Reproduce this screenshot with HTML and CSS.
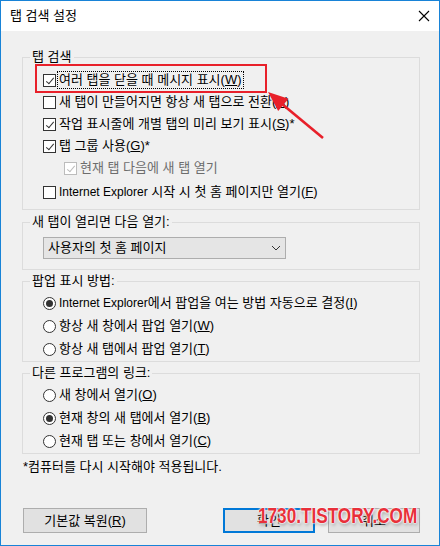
FILE: index.html
```html
<!DOCTYPE html>
<html lang="ko">
<head>
<meta charset="utf-8">
<title>탭 검색 설정</title>
<link rel="stylesheet" href="styles.css">
</head>
<body>
<div class="window">
  <div class="titlebar">
    <span class="title">탭 검색 설정</span>
    <svg class="close" width="12" height="12" viewBox="0 0 12 12"><path d="M1 1L11 11M11 1L1 11" stroke="#000" stroke-width="1.1" fill="none"/></svg>
  </div>
  <div class="content">
    <section class="group g1">
      <div class="group-title">탭 검색</div>
      <div class="rows">
        <div class="row"><span class="box checked"></span><span class="label focus">여러 탭을 닫을 때 메시지 표시(<u>W</u>)</span></div>
        <div class="row"><span class="box"></span><span class="label">새 탭이 만들어지면 항상 새 탭으로 전환(<u>A</u>)</span></div>
        <div class="row"><span class="box checked"></span><span class="label">작업 표시줄에 개별 탭의 미리 보기 표시(<u>S</u>)*</span></div>
        <div class="row"><span class="box checked"></span><span class="label">탭 그룹 사용(<u>G</u>)*</span></div>
        <div class="row sub disabled"><span class="box checked"></span><span class="label">현재 탭 다음에 새 탭 열기</span></div>
        <div class="row last"><span class="box"></span><span class="label"><span class="latin">Internet Explorer</span> 시작 시 첫 홈 페이지만 열기(<u>F</u>)</span></div>
      </div>
    </section>

    <section class="group g2">
      <div class="group-title">새 탭이 열리면 다음 열기:</div>
      <div class="select">
        <span>사용자의 첫 홈 페이지</span>
        <svg width="10" height="6" viewBox="0 0 10 6"><path d="M1 1L5 5L9 1" stroke="#333" stroke-width="1" fill="none"/></svg>
      </div>
    </section>

    <section class="group g3">
      <div class="group-title">팝업 표시 방법:</div>
      <div class="rows radios">
        <div class="row"><span class="radio on"></span><span class="label"><span class="latin">Internet Explorer</span>에서 팝업을 여는 방법 자동으로 결정(<u>I</u>)</span></div>
        <div class="row"><span class="radio"></span><span class="label">항상 새 창에서 팝업 열기(<u>W</u>)</span></div>
        <div class="row"><span class="radio"></span><span class="label">항상 새 탭에서 팝업 열기(<u>T</u>)</span></div>
      </div>
    </section>

    <section class="group g4">
      <div class="group-title">다른 프로그램의 링크:</div>
      <div class="rows radios">
        <div class="row"><span class="radio"></span><span class="label">새 창에서 열기(<u>O</u>)</span></div>
        <div class="row"><span class="radio on"></span><span class="label">현재 창의 새 탭에서 열기(<u>B</u>)</span></div>
        <div class="row"><span class="radio"></span><span class="label">현재 탭 또는 창에서 열기(<u>C</u>)</span></div>
      </div>
    </section>

    <p class="note">*컴퓨터를 다시 시작해야 적용됩니다.</p>

    <div class="buttons">
      <div class="btn btn-reset">기본값 복원(<u>R</u>)</div>
      <div class="btn btn-ok">확인</div>
      <div class="btn btn-cancel">취소</div>
    </div>
  </div>

  <svg class="annot" width="440" height="546" viewBox="0 0 440 546">
    <rect x="36" y="65" width="230" height="27" fill="none" stroke="#e8202a" stroke-width="2"/>
    <path d="M323 138L282 104" stroke="#e8202a" stroke-width="2.6" fill="none"/>
    <path d="M268 92L288.5 98.7L278.2 110.9Z" fill="#e8202a"/>
  </svg>
  <div class="watermark">1730.TISTORY.COM</div>
</div>
</body>
</html>
```
FILE: styles.css
```css
* { box-sizing: border-box; }
html, body { margin: 0; padding: 0; }
body {
  font-family: "Liberation Sans", "Noto Sans CJK KR", sans-serif;
  font-size: 13px;
  line-height: 16px;
  color: #000;
  background: #fff;
}
.latin { font-size: 12px; }
.window {
  position: relative;
  width: 440px;
  height: 546px;
  border: 1px solid #1883d7;
  background: #f0f0f0;
  overflow: hidden;
}
.titlebar {
  height: 30px;
  background: #fff;
  display: flex;
  align-items: center;
  justify-content: space-between;
  padding: 0 9px 0 9px;
}
.close { display: block; }

.content {
  padding: 26px 19px 0 21px;
}
.group {
  border: 1px solid #dcdcdc;
}
.group-title {
  width: fit-content;
  margin: -9px 0 0 7px;
  padding: 0 2px;
  height: 16px;
  line-height: 16px;
  background: #f0f0f0;
}
.rows { padding-left: 20px; }
.g1 .rows { padding-top: 4px; padding-bottom: 6px; }
.row {
  display: flex;
  align-items: center;
  height: 22px;
}
.g1 .row.last { margin-top: 2px; }
.row.sub { padding-left: 21px; }
.box {
  width: 13px;
  height: 13px;
  border: 1px solid #333;
  background: #fff;
  margin-right: 3px;
  flex: none;
  position: relative;
}
.box.checked::after {
  content: "";
  position: absolute;
  width: 3px;
  height: 7px;
  border-right: 1.2px solid #333;
  border-bottom: 1.2px solid #333;
  transform: rotate(40deg);
  transform-origin: center;
  left: 3.5px;
  top: 1px;
}
.disabled .box { border-color: #bcbcbc; }
.disabled .box.checked::after { border-color: #bcbcbc; }
.disabled .label { color: #6d6d6d; }
.label { white-space: nowrap; }
.label.focus { outline: 1px dotted #000; outline-offset: 0; padding: 0 1px; margin-left: -1px; }
u { text-decoration: underline; text-underline-offset: 1px; }

.g2 { margin-top: 12px; padding-bottom: 10px; }
.select {
  margin: 7px 0 0 20px;
  width: 243px;
  height: 22px;
  border: 1px solid #adadad;
  background: #e5e5e5;
  display: flex;
  align-items: center;
  justify-content: space-between;
  padding: 0 4px 0 4px;
}
.select svg { display: block; }

.g3, .g4 { margin-top: 11px; }
.radios { padding-top: 4px; padding-bottom: 2px; display: flex; flex-direction: column; gap: 3px; }
.radios .row { height: 20px; }
.radio {
  width: 13px;
  height: 13px;
  border: 1px solid #333;
  border-radius: 50%;
  background: #fff;
  margin-right: 3px;
  flex: none;
  display: flex;
  align-items: center;
  justify-content: center;
}
.radio.on::after {
  content: "";
  width: 7px;
  height: 7px;
  border-radius: 50%;
  background: #333;
}

.note { margin: 5px 0 0 1px; line-height: 16px; }

.buttons {
  display: flex;
  margin-top: 33px;
  padding-left: 1px;
}
.btn {
  height: 25px;
  background: #e1e1e1;
  border: 1px solid #adadad;
  display: flex;
  align-items: center;
  justify-content: center;
}
.btn-reset { width: 124px; }
.btn-ok { width: 92px; margin-left: auto; border: 2px solid #0078d7; }
.btn-cancel { width: 92px; margin-left: 13px; }

.annot {
  position: absolute;
  left: -1px;
  top: -1px;
  pointer-events: none;
}
.watermark {
  position: absolute;
  left: 257px;
  top: 502px;
  font-family: "Liberation Sans", Arial, sans-serif;
  font-size: 22px;
  font-weight: bold;
  line-height: 26px;
  color: #e8303a;
  white-space: nowrap;
  transform: scaleX(0.78);
  transform-origin: left center;
  text-shadow: 0 0 1px #fff, 0 0 2px #fff, 0 0 2px #fff, 0 0 3px #fff, 1px 2px 4px rgba(0,0,0,0.35);
}
```
